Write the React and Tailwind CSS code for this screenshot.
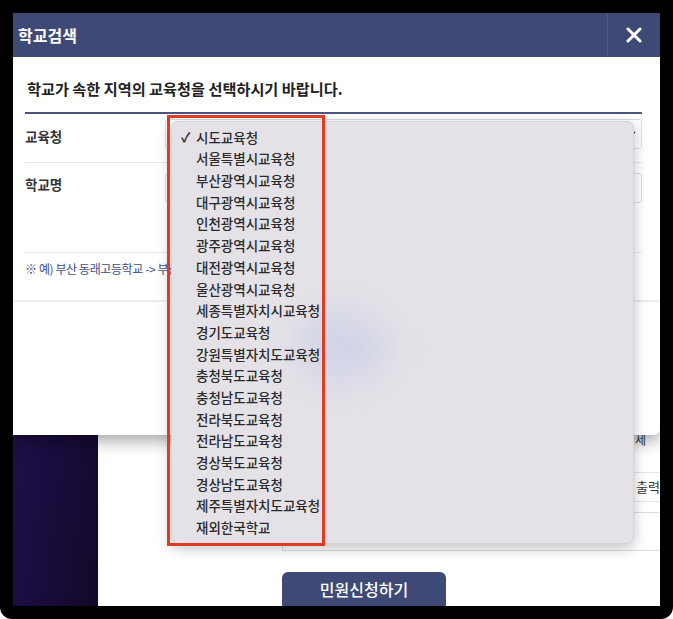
import React from 'react';

const offices = [
    '시도교육청', '서울특별시교육청', '부산광역시교육청', '대구광역시교육청', '인천광역시교육청',
    '광주광역시교육청', '대전광역시교육청', '울산광역시교육청', '세종특별자치시교육청', '경기도교육청',
    '강원특별자치도교육청', '충청북도교육청', '충청남도교육청', '전라북도교육청', '전라남도교육청',
    '경상북도교육청', '경상남도교육청', '제주특별자치도교육청', '재외한국학교',
];

const font = { fontFamily: '"Noto Sans CJK KR", "Noto Sans", sans-serif' };

// page that sits behind the modal
const BackPage = () => (
    <div className="flex h-full w-full">
        <div className="w-[85px] h-full bg-gradient-to-br from-[#241250] via-[#1c0d44] to-[#130829]" />
        <div className="flex-1 flex flex-col pt-[416px] pl-[184px] bg-white">
            <div className="h-[44px] flex items-start justify-end text-[12px] text-[#333] pr-[14px] pt-[2px] border-b border-[#e6e6e6]">세</div>
            <div className="h-[30px] flex items-center justify-end text-[13px] text-[#333] border-b border-[#e6e6e6] overflow-hidden">
                <span className="border-l border-[#ccc] pl-[2px] whitespace-nowrap">출력</span>
            </div>
            <div className="mt-[10px] h-[39px] border border-[#ddd] border-r-0" />
            <div className="mt-[21px]">
                <button className="w-[164px] h-[34px] bg-[#3e4a75] rounded-t-[6px] text-white text-[16px] font-medium">민원신청하기</button>
            </div>
        </div>
    </div>
);

const Modal = () => (
    <div className="absolute left-0 top-0 w-[647px] h-[422px] bg-white rounded-br-[6px] shadow-[0_6px_16px_rgba(0,0,0,0.35)] flex flex-col">
        <div className="h-[44px] bg-[#3e4a75] flex items-center">
            <h2 className="flex-1 pl-[5px] text-white text-[16px] font-bold">학교검색</h2>
            <div className="w-px h-[44px] bg-[#4c5884]" />
            <button className="w-[52px] h-[44px] flex items-center justify-center">
                <svg width="16" height="16" viewBox="0 0 16 16" stroke="white" strokeWidth="3" strokeLinecap="round">
                    <path d="M2 2L14 14M14 2L2 14" />
                </svg>
            </button>
        </div>
        <div className="pl-[12px] pr-[18px]">
            <p className="pl-[2px] pt-[20px] h-[55px] text-[15.2px] font-semibold text-[#222]">학교가 속한 지역의 교육청을 선택하시기 바랍니다.</p>
            <div className="h-[2px] bg-[#4b5580]" />
            <div className="flex items-center h-[49px] border-b border-[#e8e8e8]">
                <span className="w-[140px] text-[13.5px] font-bold text-[#333] -mt-[4px]">교육청</span>
                <div className="flex-1 h-[30px] -mt-[8px] border border-[#ddd] rounded-[3px] flex items-center justify-end pr-[4px]">
                    <svg width="7" height="7" viewBox="0 0 7 7"><path d="M1 5L5 1" stroke="#333" strokeWidth="1.4" /></svg>
                </div>
            </div>
            <div className="h-[90px] border-b border-[#e8e8e8] flex pt-[10px]">
                <span className="w-[140px] text-[13.5px] font-bold text-[#333] pt-[1px]">학교명</span>
                <div className="flex-1 h-[30px] border border-[#ddd] rounded-[3px]" />
            </div>
            <p className="pt-[7px] h-[47px] text-[12px] tracking-[-0.4px] text-[#3d4d86] whitespace-nowrap">※ 예) 부산 동래고등학교 -&gt; 부산동래고</p>
        </div>
        <div className="h-[2px] bg-[#ececec]" />
    </div>
);

const Dropdown = () => (
    <div className="absolute left-[158px] top-[108px] w-[463px] h-[423px] bg-[#e4e2e7] rounded-[7px] shadow-[0_4px_14px_rgba(0,0,0,0.25)] border border-[#d6d4d9] pt-[4px] overflow-hidden">
        <div className="absolute left-[125px] top-[190px] w-[90px] h-[70px] rounded-full bg-[#c6cbe8] opacity-60 blur-[18px]" />
        {offices.map((name, i) => (
            <div key={name} className="relative h-[21.7px] flex items-center text-[13.5px] font-medium text-[#2a2a2a]">
                <span className="w-[24px] pl-[9px] text-[13px] font-bold">{i === 0 ? '✓' : ''}</span>
                <span>{name}</span>
            </div>
        ))}
    </div>
);

export default function App() {
    return (
        <div className="w-[673px] h-[619px] bg-white" style={font}>
            <div className="w-full h-full bg-black rounded-b-[12px] p-[13px]">
                <div className="relative w-full h-full overflow-hidden">
                    <BackPage />
                    <Modal />
                    <Dropdown />
                    <div className="absolute left-[154px] top-[102px] w-[158px] h-[431px] border-[3px] border-[#e23b22]" />
                </div>
            </div>
        </div>
    );
}
